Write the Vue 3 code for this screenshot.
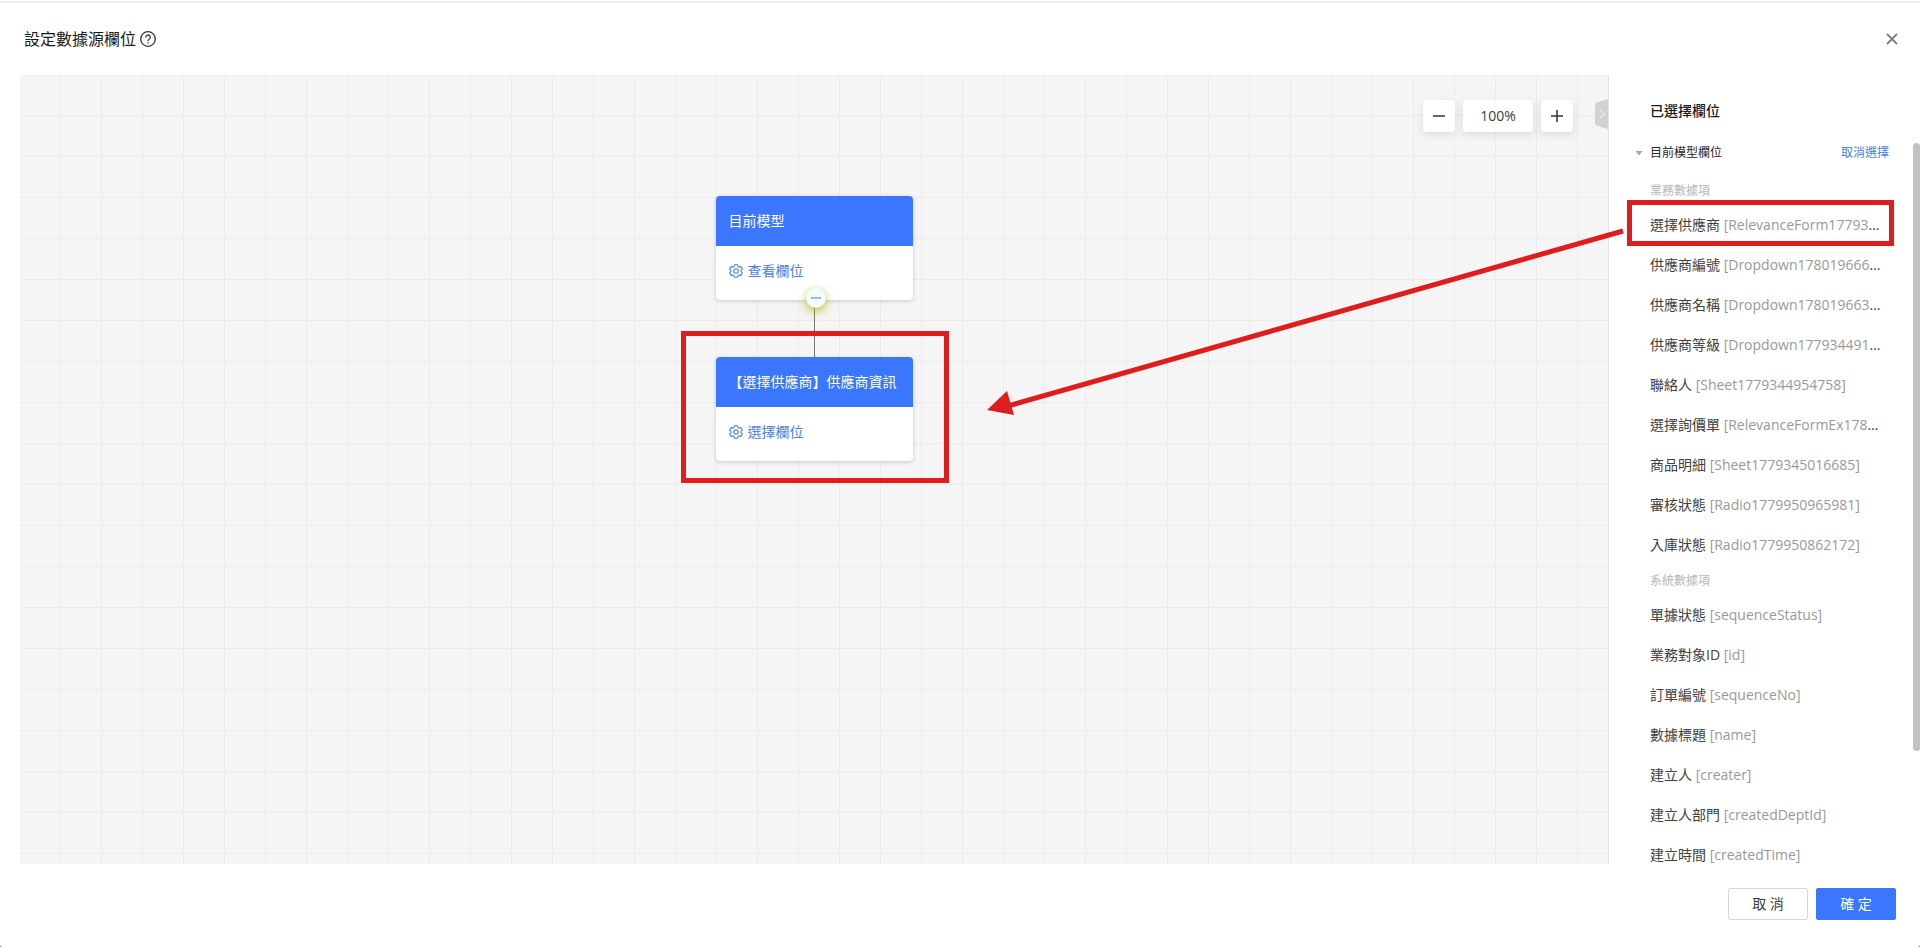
<template>
    <div class="dialog" lang="zh-Hant">
        <header class="dialog-header">
            <h1 class="dialog-title">設定數據源欄位</h1>
            <button type="button" class="icon-btn" aria-label="help">
                <svg width="16" height="16" viewBox="0 0 16 16" fill="none" stroke="#333" stroke-width="1.3">
                    <circle cx="8" cy="8" r="7.3" />
                    <path d="M5.7 6.4a2.3 2.3 0 1 1 3.5 1.9c-.8.5-1.2.8-1.2 1.7" />
                    <path d="M8 11.2v1.4" />
                </svg>
            </button>
            <button type="button" class="icon-btn close-btn" aria-label="close">
                <svg width="12" height="12" viewBox="0 0 12 12" fill="none" stroke="#7d7d7d" stroke-width="1.8">
                    <path d="M1 1l10 10M11 1L1 11" />
                </svg>
            </button>
        </header>

        <main class="dialog-body">
            <section class="canvas">
                <div class="zoom-bar">
                    <button type="button" class="zoom-btn" aria-label="zoom out">
                        <svg width="14" height="14" viewBox="0 0 14 14" stroke="#333" stroke-width="1.5">
                            <path d="M1 7h12" />
                        </svg>
                    </button>
                    <span class="zoom-value">100%</span>
                    <button type="button" class="zoom-btn" aria-label="zoom in">
                        <svg width="14" height="14" viewBox="0 0 14 14" stroke="#333" stroke-width="1.5">
                            <path d="M1 7h12M7 1v12" />
                        </svg>
                    </button>
                </div>
                <button type="button" class="collapse-btn" aria-label="collapse">
                    <svg width="13" height="30" viewBox="0 0 13 30">
                        <path d="M13 0v30L2 26.500Q0 26 0 24V6q0-2 2-2.500z" fill="#d2d2d2" />
                        <path d="M4.500 10l5 5-5 5" fill="none" stroke="#f5f5f5" stroke-width="1" />
                    </svg>
                </button>

                <div class="tree">
                    <div v-for="(node, index) in nodes" :key="index" class="node">
                        <h2 class="node-title">{{ node.title }}</h2>
                        <div class="node-body">
                            <a href="#" class="node-link">
                                <svg width="14" height="14" viewBox="0 0 14 14" fill="none" stroke="#4a7fe0"
                                    stroke-width="1.1" stroke-linejoin="round">
                                    <path
                                        d="M5.500.7h3l.5 1.700 1.200.7 1.700-.5 1.400 2.500L12.100 6.300v1.400l1.200 1.200-1.400 2.500-1.700-.5-1.200.7-.5 1.700h-3L5 11.600l-1.200-.7-1.700.5L.7 8.900l1.200-1.200V6.300L.7 5.100l1.400-2.500 1.700.5L5 2.400z" />
                                    <circle cx="7" cy="7" r="2.200" />
                                </svg>
                                <span>{{ node.action }}</span>
                            </a>
                        </div>
                        <template v-if="index === 0">
                            <span class="connector"></span>
                            <button type="button" class="fold-btn" aria-label="fold"></button>
                        </template>
                        <span v-else class="mark node-mark"></span>
                    </div>
                </div>
            </section>

            <aside class="panel">
                <h2 class="panel-title">已選擇欄位</h2>
                <div class="panel-scroll">
                    <div class="model-row">
                        <span class="caret"></span>
                        <span class="model-name">目前模型欄位</span>
                        <a href="#" class="model-cancel">取消選擇</a>
                    </div>
                    <div v-for="group in groups" :key="group.label">
                        <h3 class="group-label">{{ group.label }}</h3>
                        <ul class="field-list">
                            <li v-for="field in group.fields" :key="field.name" class="field">
                                {{ field.name }} <span class="field-code">{{ field.code }}</span>{{ field.cut ? '…' : '' }}
                            </li>
                        </ul>
                    </div>
                </div>
                <span class="scroll-thumb"></span>
                <span class="mark field-mark"></span>
            </aside>

            <svg class="arrow" width="640" height="190" viewBox="0 0 640 190">
                <path d="M639 6L24 181" stroke="#e01d1d" stroke-width="5" />
                <path d="M3 185L23 166L30 190z" fill="#e01d1d" />
            </svg>
        </main>

        <footer class="dialog-footer">
            <button type="button" class="btn">取 消</button>
            <button type="button" class="btn btn-primary">確 定</button>
        </footer>
    </div>
</template>

<script setup>
const nodes = [
    { title: '目前模型', action: '查看欄位' },
    { title: '【選擇供應商】供應商資訊', action: '選擇欄位' },
];

const groups = [
    {
        label: '業務數據項',
        fields: [
            { name: '選擇供應商', code: '[RelevanceForm17793', cut: true },
            { name: '供應商編號', code: '[Dropdown178019666', cut: true },
            { name: '供應商名稱', code: '[Dropdown178019663', cut: true },
            { name: '供應商等級', code: '[Dropdown177934491', cut: true },
            { name: '聯絡人', code: '[Sheet1779344954758]' },
            { name: '選擇詢價單', code: '[RelevanceFormEx178', cut: true },
            { name: '商品明細', code: '[Sheet1779345016685]' },
            { name: '審核狀態', code: '[Radio1779950965981]' },
            { name: '入庫狀態', code: '[Radio1779950862172]' },
        ],
    },
    {
        label: '系統數據項',
        fields: [
            { name: '單據狀態', code: '[sequenceStatus]' },
            { name: '業務對象ID', code: '[id]' },
            { name: '訂單編號', code: '[sequenceNo]' },
            { name: '數據標題', code: '[name]' },
            { name: '建立人', code: '[creater]' },
            { name: '建立人部門', code: '[createdDeptId]' },
            { name: '建立時間', code: '[createdTime]' },
        ],
    },
];
</script>

<style>
body {
    margin: 0;
    background-color: #8a8a8a;
}
</style>

<style scoped>
.dialog {
    display: flex;
    flex-direction: column;
    height: 100vh;
    box-sizing: border-box;
    overflow: hidden;
    background-color: #fff;
    border-radius: 0 0 3px 3px;
    color: #404040;
    font-family: "Open Sans", "Noto Sans CJK TC", sans-serif;
    font-size: 14px;
    line-height: 20px;
}

h1,
h2,
h3,
ul {
    margin: 0;
    padding: 0;
}

button {
    padding: 0;
    border: none;
    background: none;
    font: inherit;
    color: inherit;
    cursor: pointer;
}

a {
    color: #4a7fe0;
    text-decoration: none;
}

svg {
    display: block;
}

.dialog-header {
    display: flex;
    align-items: center;
    gap: 4px;
    flex: 0 0 75px;
    box-sizing: border-box;
    position: relative;
    padding: 2px 22px 0 24px;
}

.dialog-header::before {
    content: "";
    position: absolute;
    top: 1px;
    left: 0;
    right: 0;
    height: 2px;
    background-color: #efefef;
}

.dialog-title {
    color: #1a1a1a;
    font-size: 16px;
    font-weight: 400;
    line-height: 24px;
}

.close-btn {
    margin-left: auto;
}

.dialog-body {
    display: flex;
    flex: 1;
    min-height: 0;
    position: relative;
    padding-left: 20px;
}

.canvas {
    flex: 1;
    position: relative;
    background-color: #f5f5f5;
    background-image:
        linear-gradient(to right, transparent 40px, #ececec 40px),
        linear-gradient(to bottom, transparent 40px, #ececec 40px);
    background-size: 41px 41px;
}

.zoom-bar {
    position: absolute;
    top: 25px;
    right: 35px;
    display: flex;
    gap: 8px;
}

.zoom-btn,
.zoom-value {
    display: flex;
    align-items: center;
    justify-content: center;
    width: 32px;
    height: 32px;
    background-color: #fff;
    border-radius: 3px;
    box-shadow: 0 3px 10px rgba(0, 0, 0, 0.1);
}

.zoom-value {
    width: 70px;
}

.collapse-btn {
    position: absolute;
    top: 24px;
    right: 0;
}

.tree {
    display: flex;
    flex-direction: column;
    align-items: center;
    gap: 57px;
    padding-top: 121px;
}

.node {
    position: relative;
    width: 197px;
    background-color: #fff;
    border-radius: 4px;
    box-shadow: 0 1px 4px rgba(0, 0, 0, 0.18);
}

.node-title {
    padding: 15px 13px;
    background-color: #3b76ff;
    border-radius: 4px 4px 0 0;
    color: #fff;
    font-size: 14px;
    font-weight: 400;
    line-height: 20px;
    white-space: nowrap;
}

.node-body {
    padding: 15px 13px 19px;
}

.node-link {
    display: flex;
    align-items: center;
    gap: 5px;
}

.connector {
    position: absolute;
    top: 100%;
    left: 98px;
    width: 1px;
    height: 57px;
    background-color: #777;
}

.fold-btn {
    position: absolute;
    bottom: -8px;
    left: 90px;
    width: 20px;
    height: 20px;
    background-color: #f0fffc;
    border-radius: 50%;
    box-shadow: 0 3px 10px rgba(180, 180, 20, 0.9);
}

.fold-btn::before {
    content: "";
    display: block;
    width: 10px;
    height: 2px;
    margin: 0 auto;
    background-color: #9bb9ea;
}

.mark {
    position: absolute;
    box-sizing: border-box;
    border: 5px solid #e01d1d;
    pointer-events: none;
}

.node-mark {
    top: -26px;
    right: -36px;
    bottom: -22px;
    left: -35px;
}

.field-mark {
    top: 125px;
    right: 26px;
    left: 18px;
    height: 46px;
}

.arrow {
    position: absolute;
    top: 150px;
    right: 296px;
    pointer-events: none;
}

.panel {
    display: flex;
    flex-direction: column;
    flex: 0 0 312px;
    box-sizing: border-box;
    position: relative;
    border-left: 1px solid #e4e4e4;
}

.panel-title {
    padding: 26px 0 14px 41px;
    color: #1a1a1a;
    font-size: 14px;
    font-weight: 500;
    line-height: 20px;
}

.panel-scroll {
    flex: 1;
    min-height: 0;
    overflow: hidden;
    padding: 0 31px 0 26px;
}

.model-row {
    display: flex;
    align-items: center;
    height: 36px;
    padding-bottom: 4px;
    font-size: 12px;
}

.caret {
    width: 8px;
    height: 5px;
    margin-right: 7px;
    background-color: #a6a6a6;
    clip-path: polygon(0 0, 100% 0, 50% 100%);
}

.model-name {
    color: #262626;
}

.model-cancel {
    margin-left: auto;
}

.group-label {
    height: 30px;
    padding-left: 15px;
    color: #b8b8b8;
    font-size: 12px;
    font-weight: 400;
    line-height: 32px;
}

.field-list {
    padding-left: 15px;
    list-style: none;
}

.field {
    line-height: 40px;
    white-space: nowrap;
}

.field-code {
    color: #999;
}

.scroll-thumb {
    position: absolute;
    top: 68px;
    right: 0;
    width: 7px;
    height: 77%;
    background-color: #c1c2c4;
    border-radius: 4px;
}

.dialog-footer {
    display: flex;
    align-items: flex-start;
    justify-content: flex-end;
    flex: 0 0 83px;
    box-sizing: border-box;
    gap: 8px;
    padding: 24px 24px 0;
}

.btn {
    width: 80px;
    height: 32px;
    box-sizing: border-box;
    border: 1px solid #d6d6d6;
    border-radius: 2px;
}

.btn-primary {
    border-color: #3b76ff;
    background-color: #3b76ff;
    color: #fff;
}
</style>
